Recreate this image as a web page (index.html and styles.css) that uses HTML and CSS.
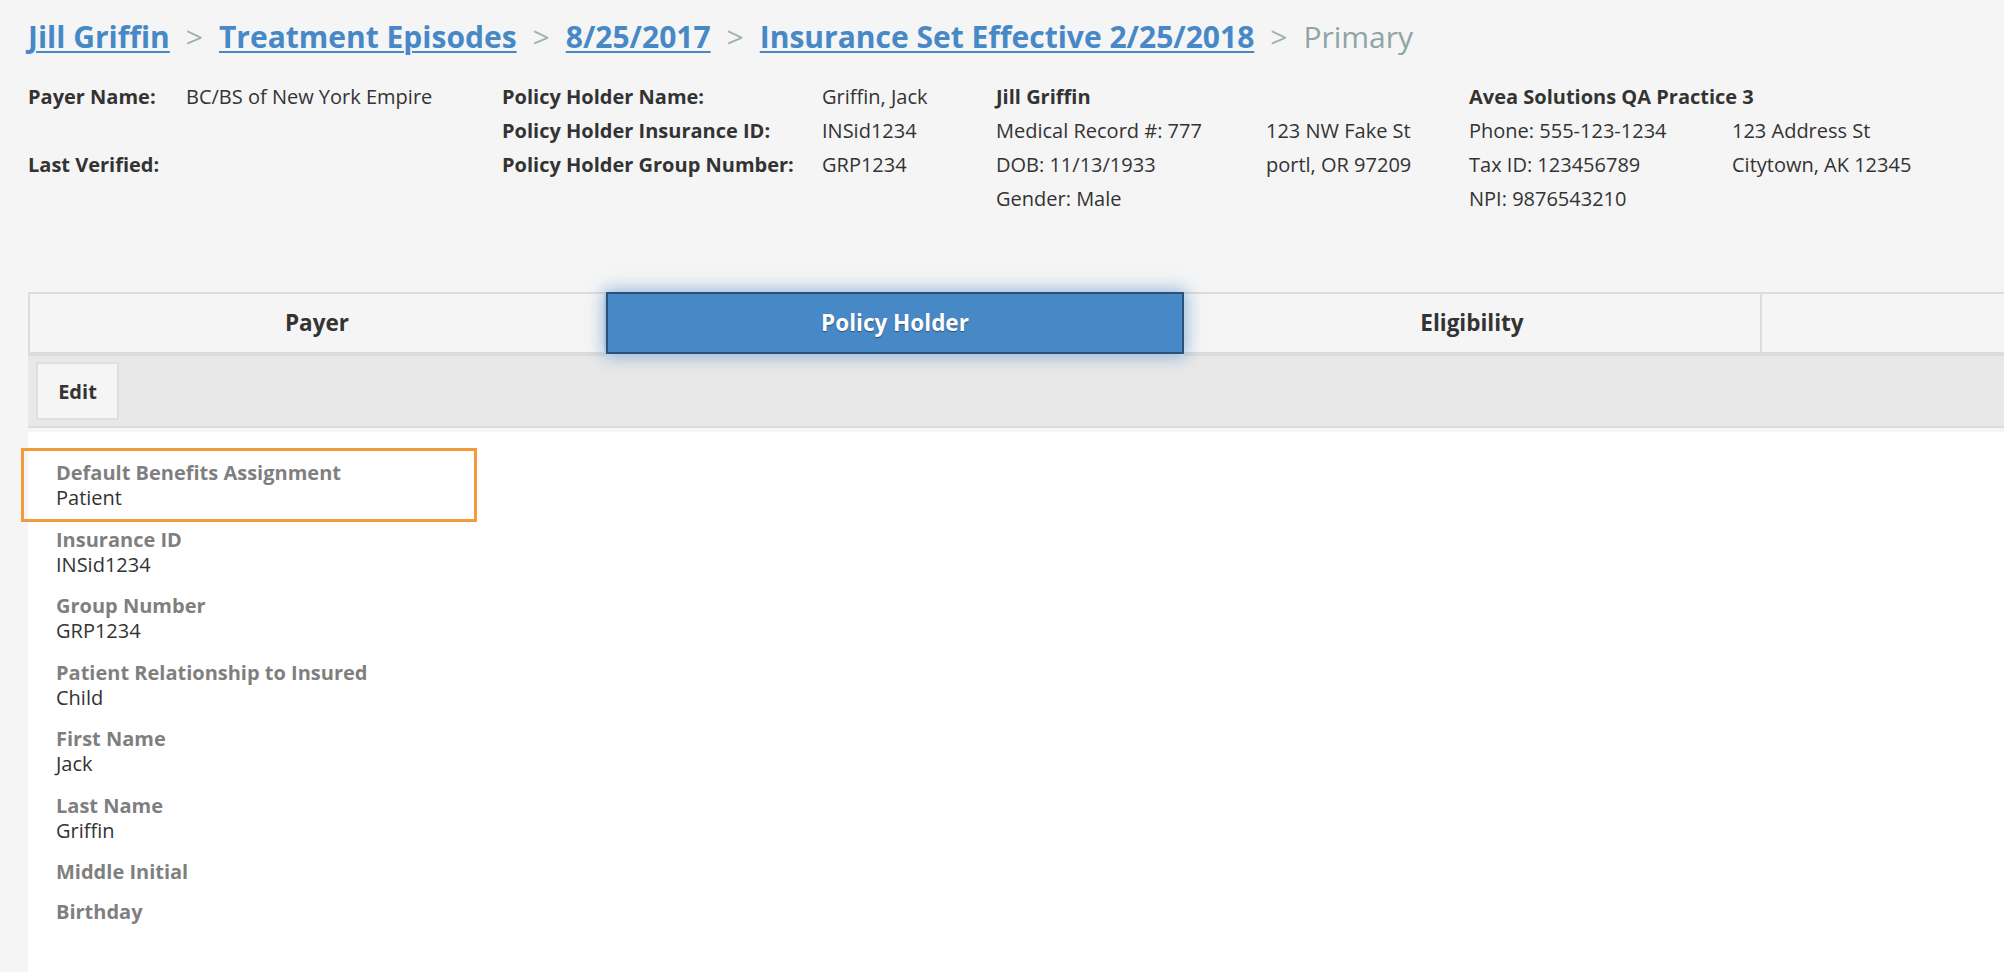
FILE: index.html
```html
<!DOCTYPE html>
<html lang="en">
<head>
    <meta charset="UTF-8">
    <title>Policy Holder - Jill Griffin</title>
    <link rel="stylesheet" href="styles.css">
</head>
<body>
<div class="page">

    <!-- Breadcrumb -->
    <nav class="crumbs">
        <a href="#">Jill Griffin</a><span class="sep">&gt;</span><a href="#">Treatment Episodes</a><span class="sep">&gt;</span><a href="#">8/25/2017</a><span class="sep">&gt;</span><a href="#">Insurance Set Effective 2/25/2018</a><span class="sep">&gt;</span><span class="current">Primary</span>
    </nav>

    <!-- Summary header -->
    <div class="summary">
        <div class="block block-payer">
            <b>Payer Name:</b><span>BC/BS of New York Empire</span>
            <span></span><span></span>
            <b>Last Verified:</b><span></span>
        </div>
        <div class="block block-holder">
            <b>Policy Holder Name:</b><span>Griffin, Jack</span>
            <b>Policy Holder Insurance ID:</b><span>INSid1234</span>
            <b>Policy Holder Group Number:</b><span>GRP1234</span>
        </div>
        <div class="block block-patient">
            <b class="wide">Jill Griffin</b>
            <span>Medical Record #: 777</span><span>123 NW Fake St</span>
            <span>DOB: 11/13/1933</span><span>portl, OR 97209</span>
            <span class="wide">Gender: Male</span>
        </div>
        <div class="block block-practice">
            <b class="wide">Avea Solutions QA Practice 3</b>
            <span>Phone: 555-123-1234</span><span>123 Address St</span>
            <span>Tax ID: 123456789</span><span>Citytown, AK 12345</span>
            <span class="wide">NPI: 9876543210</span>
        </div>
    </div>

    <!-- Tabs + content -->
    <div class="panel">
        <div class="tabs">
            <a class="tab" href="#">Payer</a>
            <a class="tab active" href="#">Policy Holder</a>
            <a class="tab" href="#">Eligibility</a>
            <a class="tab" href="#"></a>
        </div>
        <div class="toolbar">
            <button class="btn">Edit</button>
        </div>
        <div class="fields">
            <div class="field highlight">
                <div class="label">Default Benefits Assignment</div>
                <div class="value">Patient</div>
            </div>
            <div class="field">
                <div class="label">Insurance ID</div>
                <div class="value">INSid1234</div>
            </div>
            <div class="field">
                <div class="label">Group Number</div>
                <div class="value">GRP1234</div>
            </div>
            <div class="field">
                <div class="label">Patient Relationship to Insured</div>
                <div class="value">Child</div>
            </div>
            <div class="field">
                <div class="label">First Name</div>
                <div class="value">Jack</div>
            </div>
            <div class="field">
                <div class="label">Last Name</div>
                <div class="value">Griffin</div>
            </div>
            <div class="field">
                <div class="label">Middle Initial</div>
                <div class="value"></div>
            </div>
            <div class="field">
                <div class="label">Birthday</div>
                <div class="value"></div>
            </div>
        </div>
    </div>

</div>
</body>
</html>
```

FILE: styles.css
```css
html, body {
    margin: 0;
    padding: 0;
    height: 100%;
    overflow: hidden;
}

body {
    font-family: 'Open Sans', 'Noto Sans', sans-serif;
    font-size: 20px;
    background: #f5f5f5;
    color: #333;
}

.page {
    padding: 17px 0 0 28px;
    height: 100%;
    box-sizing: border-box;
    display: flex;
    flex-direction: column;
}

/* Breadcrumb */

.crumbs {
    font-size: 30px;
    line-height: 40px;
    font-weight: 700;
    white-space: nowrap;
}

.crumbs a {
    color: #4788c7;
    text-decoration: underline;
    text-decoration-thickness: 2px;
    text-underline-offset: 3px;
}

.crumbs .sep {
    color: #9fb2ae;
    font-weight: 400;
    margin: 0 16px;
}

.crumbs .current {
    color: #8fa4a4;
    font-weight: 400;
}

/* Summary */

.summary {
    display: flex;
    margin-top: 23px;
    margin-bottom: 76px;
    line-height: 34px;
    white-space: nowrap;
}

.block {
    display: grid;
    align-content: start;
    grid-auto-rows: 34px;
}

.block b {
    font-weight: 700;
}

.block .wide {
    grid-column: 1 / 3;
}

.block-payer {
    grid-template-columns: 158px 316px;
}

.block-holder {
    grid-template-columns: 320px 174px;
}

.block-patient {
    grid-template-columns: 270px 203px;
}

.block-practice {
    grid-template-columns: 263px 260px;
}

/* Tabs */

.panel {
    flex: 1;
    display: flex;
    flex-direction: column;
}

.tabs {
    display: flex;
    align-items: flex-start;
    background: #e8e8e8;
}

.tab {
    flex: 0 0 578px;
    box-sizing: border-box;
    height: 64px;
    line-height: 58px;
    border-top: 2px solid #dcdcdc;
    border-bottom: 4px solid #dcdcdc;
    border-right: 2px solid #dcdcdc;
    background: #f5f5f5;
    text-align: center;
    font-size: 22.5px;
    font-weight: 700;
    color: #333;
    text-decoration: none;
}

.tab:first-child {
    border-left: 2px solid #dcdcdc;
}

.tab.active {
    height: 62px;
    border: 2px solid #2b5179;
    background: #4788c6;
    color: #fff;
    text-shadow: 0 1px 1px #2b5179;
    box-shadow: 0 0 16px 2px rgba(71, 136, 198, 0.6);
    position: relative;
}

/* Toolbar */

.toolbar {
    background: #e8e8e8;
    border-bottom: 2px solid #dcdcdc;
    margin-bottom: 4px;
    padding: 6px 8px 6px;
    height: 58px;
}

.btn {
    font-family: inherit;
    font-size: 20px;
    font-weight: 700;
    color: #333;
    background: #f5f5f5;
    border: 2px solid #dedede;
    width: 83px;
    height: 58px;
    padding: 0;
    cursor: pointer;
}

/* Fields */

.fields {
    flex: 1;
    background: #fff;
    padding: 28px 28px;
}

.field {
    margin-bottom: 15px;
}

.field .label {
    font-weight: 700;
    color: #7f7f7f;
    line-height: 25px;
}

.field .value {
    color: #333;
    line-height: 26.5px;
}

.highlight {
    position: relative;
}

.highlight::after {
    content: "";
    position: absolute;
    left: -35px;
    top: -12px;
    width: 456px;
    height: 74px;
    box-sizing: border-box;
    border: 3px solid #f39b38;
}
```
